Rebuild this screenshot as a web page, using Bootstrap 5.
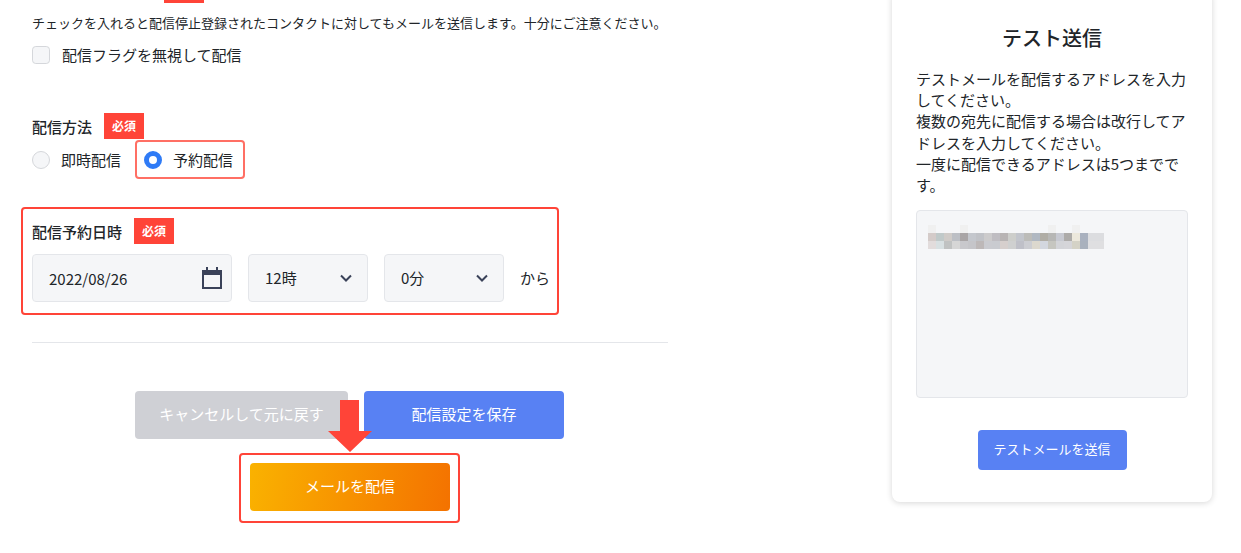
<!DOCTYPE html>
<html lang="ja">
<head>
<meta charset="utf-8">
<title>メール配信設定</title>
<link href="https://cdn.jsdelivr.net/npm/bootstrap@5.3.0/dist/css/bootstrap.min.css" rel="stylesheet">
<style>
html,body{height:553px;overflow:hidden}
body{font-family:"Noto Sans CJK JP","Noto Sans",sans-serif;font-size:15px;color:#212529;background:#fff}
.page-wrap{padding-left:32px;height:553px}
.main-col{width:636px;flex:none;position:relative}
.top-stub{width:40px;height:3px;background:#ff4438;margin-left:132px}
.note-text{font-size:13px;line-height:20px;margin:10px 0 13px}
.flag-row{height:18px;line-height:18px;gap:12px}
.fake-check{width:18px;height:18px;margin:0!important;background-color:#f5f6f8;border:1px solid #d5d7db;border-radius:3px;flex:none}
.fake-radio{border-radius:50%}
.fake-radio:checked{background-color:#fff;border:5px solid #2f7bf6;background-image:none}
.method-label{margin-top:49px;height:26px;gap:12px;font-weight:500;line-height:27px}
.req-tag{width:40px;height:26px;background:#ff4438;color:#fff;font-size:12px;font-weight:700;line-height:26px;text-align:center}
.method-row{height:39px;margin-top:1px}
.radio-item{gap:11px;line-height:16px}
.radio-box{margin-left:14px;width:110px;height:39px;padding-left:7px;border:2px solid #ff6f64;border-radius:4px}
.date-box{margin:28px 0 0 -11px;width:538px;height:108px;border:2px solid #ff4438;border-radius:4px;padding:9px 9px 0}
.date-label{height:26px;gap:12px;font-weight:500;line-height:27px}
.date-row{margin-top:10px;gap:16px}
.field-box{height:48px;flex:none;font-size:15px;color:#212529;background-color:#f5f6f8;border:1px solid #e4e6ea;border-radius:4px;padding:0 16px}
.date-field{width:200px;background-image:url("data:image/svg+xml,%3Csvg xmlns='http://www.w3.org/2000/svg' viewBox='0 0 22 24'%3E%3Cpath fill='none' stroke='%233a4259' stroke-width='2' d='M2 6h18v16H2z'/%3E%3Cpath fill='%233a4259' d='M1 4h20v5H1zM5 1h2v4H5zM15 1h2v4h-2z'/%3E%3C/svg%3E");background-repeat:no-repeat;background-position:right 8px center;background-size:22px 24px}
.time-field{width:120px;background-image:url("data:image/svg+xml,%3Csvg xmlns='http://www.w3.org/2000/svg' viewBox='0 0 12 8'%3E%3Cpath fill='none' stroke='%233a4259' stroke-width='2' d='M1 1.5l5 5 5-5'/%3E%3C/svg%3E");background-position:right 15px center;background-size:12px 8px}
.from-text{line-height:48px;white-space:nowrap}
.sep-line{height:1px;background:#e4e6ea;margin-top:27px}
.action-row{margin:48px 0 0 103px;gap:16px}
.act-btn{height:48px;font-size:15px;color:#fff;border:0;border-radius:4px;padding:0 0 2px;display:flex;align-items:center;justify-content:center}
.btn-cancel{width:213px;background:#cfd0d5}
.btn-save{width:200px;background:#5881f3}
.send-box{width:221px;height:70px;margin:14px 0 0 207px;border:2px solid #ff4438;border-radius:4px;padding:8px 9px}
.btn-send{width:200px;background:linear-gradient(100deg,#fab200,#f47200)}
.red-arrow{position:absolute;left:296px;top:400px;width:44px;height:52px}
.side-card{width:320px;height:512px;margin:-10px 0 0 224px;flex:none;background:#fff;border-radius:8px;box-shadow:0 1px 6px rgba(0,0,0,.16);padding:0 24px}
.side-title{font-size:20px;line-height:28px;font-weight:500;text-align:center;margin:34px 0 16px}
.side-text{line-height:21.2px;margin:0 0 15px;letter-spacing:0}
.mail-area{height:188px;background:#f5f6f8;border:1px solid #e4e6ea;border-radius:4px;padding:14px 11px}
.mail-area svg{display:block}
.btn-test{width:149px;height:40px;font-size:13px;background:#5881f3;margin:32px auto 0}
</style>
</head>
<body>
<div class="page-wrap d-flex">
  <div class="main-col">
    <div class="top-stub"></div>
    <p class="note-text">チェックを入れると配信停止登録されたコンタクトに対してもメールを送信します。十分にご注意ください。</p>
    <div class="flag-row d-flex align-items-center">
      <input class="form-check-input fake-check" type="checkbox" aria-label="配信フラグを無視して配信">
      <span>配信フラグを無視して配信</span>
    </div>
    <div class="method-label d-flex"><span>配信方法</span><span class="req-tag">必須</span></div>
    <div class="method-row d-flex align-items-center">
      <div class="radio-item d-flex align-items-center">
        <input class="form-check-input fake-check fake-radio" type="radio" name="method" aria-label="即時配信">
        <span>即時配信</span>
      </div>
      <div class="radio-box radio-item d-flex align-items-center">
        <input class="form-check-input fake-check fake-radio" type="radio" name="method" checked aria-label="予約配信">
        <span>予約配信</span>
      </div>
    </div>
    <div class="date-box">
      <div class="date-label d-flex"><span>配信予約日時</span><span class="req-tag">必須</span></div>
      <div class="date-row d-flex">
        <input class="form-control field-box date-field" type="text" value="2022/08/26" aria-label="配信予約日">
        <select class="form-select field-box time-field" aria-label="時"><option>12時</option></select>
        <select class="form-select field-box time-field" aria-label="分"><option>0分</option></select>
        <span class="from-text">から</span>
      </div>
    </div>
    <div class="sep-line"></div>
    <div class="action-row d-flex">
      <button class="btn act-btn btn-cancel" type="button">キャンセルして元に戻す</button>
      <button class="btn act-btn btn-save" type="button">配信設定を保存</button>
    </div>
    <div class="send-box">
      <button class="btn act-btn btn-send" type="button">メールを配信</button>
    </div>
    <svg class="red-arrow" viewBox="0 0 44 52" aria-hidden="true"><path fill="#ff4438" d="M12 0h19v31h13L22 52 0 31h12z"/></svg>
  </div>
  <aside class="side-card">
    <h2 class="side-title">テスト送信</h2>
    <p class="side-text">テストメールを配信するアドレスを入力してください。<br>複数の宛先に配信する場合は改行してアドレスを入力してください。<br>一度に配信できるアドレスは5つまでです。</p>
    <div class="mail-area">
      <svg width="176" height="24" viewBox="0 0 22 3" shape-rendering="crispEdges" aria-hidden="true">
        <g fill="#f0f0f0"><rect x="0" y="0" width="1" height="1"/><rect x="4" y="0" width="1" height="1"/><rect x="15" y="0" width="1" height="1"/><rect x="18" y="0" width="1" height="1"/></g>
        <g>
          <rect x="0" y="1" width="1" height="1" fill="#d4cbc9"/><rect x="1" y="1" width="1" height="1" fill="#c0c9c9"/><rect x="2" y="1" width="1" height="1" fill="#cfcbc8"/><rect x="3" y="1" width="1" height="1" fill="#bcbfc5"/><rect x="4" y="1" width="1" height="1" fill="#a9a5a6"/><rect x="5" y="1" width="1" height="1" fill="#c4c7cd"/><rect x="6" y="1" width="1" height="1" fill="#c0c2c7"/><rect x="7" y="1" width="1" height="1" fill="#cccbcc"/><rect x="8" y="1" width="1" height="1" fill="#bfbdc2"/><rect x="9" y="1" width="1" height="1" fill="#b8b4b4"/><rect x="10" y="1" width="1" height="1" fill="#cdcecb"/><rect x="11" y="1" width="1" height="1" fill="#c2c5cc"/><rect x="12" y="1" width="1" height="1" fill="#bcbcb9"/><rect x="13" y="1" width="1" height="1" fill="#b0b8c2"/><rect x="14" y="1" width="1" height="1" fill="#b0ada5"/><rect x="15" y="1" width="1" height="1" fill="#b7b7b5"/><rect x="16" y="1" width="1" height="1" fill="#c7c9d1"/><rect x="17" y="1" width="1" height="1" fill="#adaba9"/><rect x="18" y="1" width="1" height="1" fill="#ece8dc"/><rect x="19" y="1" width="1" height="1" fill="#a9b1bf"/><rect x="20" y="1" width="2" height="1" fill="#dcdde0"/>
          <rect x="0" y="2" width="1" height="1" fill="#e2dcdc"/><rect x="1" y="2" width="1" height="1" fill="#d8e0e2"/><rect x="2" y="2" width="1" height="1" fill="#c0c2c2"/><rect x="3" y="2" width="1" height="1" fill="#d6d6d6"/><rect x="4" y="2" width="1" height="1" fill="#c8c8cc"/><rect x="5" y="2" width="1" height="1" fill="#c5c5c9"/><rect x="6" y="2" width="1" height="1" fill="#bdb8b8"/><rect x="7" y="2" width="1" height="1" fill="#cacbd0"/><rect x="8" y="2" width="1" height="1" fill="#c9cbd0"/><rect x="9" y="2" width="1" height="1" fill="#d6cfcd"/><rect x="10" y="2" width="1" height="1" fill="#cfd0d0"/><rect x="11" y="2" width="1" height="1" fill="#bfc0c8"/><rect x="12" y="2" width="1" height="1" fill="#cccdd2"/><rect x="13" y="2" width="1" height="1" fill="#dcd8ce"/><rect x="14" y="2" width="1" height="1" fill="#d3d7df"/><rect x="15" y="2" width="1" height="1" fill="#c6c6c0"/><rect x="16" y="2" width="1" height="1" fill="#d3d4d8"/><rect x="17" y="2" width="1" height="1" fill="#d5d5d9"/><rect x="18" y="2" width="1" height="1" fill="#d4d2c6"/><rect x="19" y="2" width="1" height="1" fill="#a9b1bd"/><rect x="20" y="2" width="2" height="1" fill="#dfdfe1"/>
        </g>
      </svg>
    </div>
    <button class="btn act-btn btn-test" type="button">テストメールを送信</button>
  </aside>
</div>
<script src="https://cdn.jsdelivr.net/npm/bootstrap@5.3.0/dist/js/bootstrap.bundle.min.js"></script>
</body>
</html>
